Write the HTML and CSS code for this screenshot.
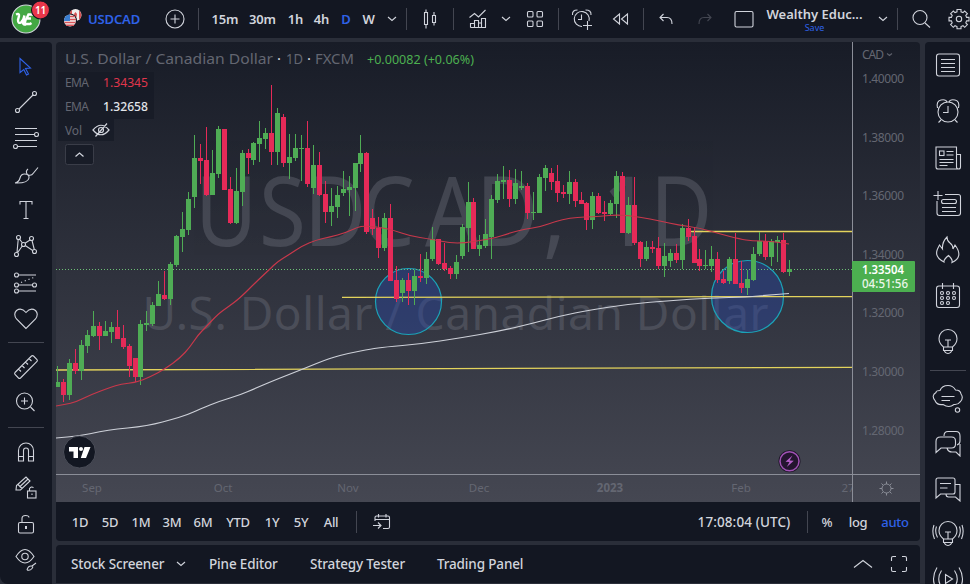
FILE: index.html
```
<!DOCTYPE html>
<html lang="en">
<head>
  <meta charset="UTF-8" />
  <meta name="viewport" content="width=device-width, initial-scale=1.0" />
  <title>USDCAD Chart</title>
  <link rel="stylesheet" href="styles.css">
</head>
<body>
  <div class="app">
    <header class="topbar">
      <div class="cell">
        <svg class="icon" width="52" height="38" viewBox="0 0 52 38">
          <circle cx="26" cy="19" r="14" fill="#43a843"/>
          <path d="M16 14.500q3.500-1.500 3 1.500l-1 4q0 4 3 2.500 2.500-2 3.500-7l-1.500 7q0 2.500 3 2M33 14.500h-4.500l-2 4h4.500M26 18.500l-1.500 5.500h5.500l1.500-1" stroke="#fff" stroke-width="2.400"/>
          <circle cx="40.500" cy="10" r="9" fill="#e8364a" stroke="#131722"/>
          <text class="badge" x="40.500" y="13.500" text-anchor="middle">11</text>
        </svg>
      </div>
      <div class="cell">
        <svg class="icon" width="36" height="38" viewBox="0 0 36 38">
          <circle cx="23.500" cy="15" r="6" fill="#f2eeee" stroke="none"/>
          <path d="M20 10a6 6 0 0 0-2 7l2 2zM27 10.200a6 6 0 0 1 0 9.600z" fill="#d75455" stroke="none"/>
          <path d="M22 14l1.500-2 1.500 2-.5 3h-2z" fill="#d75455" stroke="none"/>
          <circle cx="18" cy="20.500" r="7" fill="#131722" stroke="none"/>
          <circle cx="18" cy="20.500" r="6" fill="#f2eeee" stroke="none"/>
          <path d="M18 16.500h4.500M18 19.500h6M12.500 22.500h11M14 25.200h8" stroke="#d7555a" stroke-width="1.400"/>
          <path d="M18 14.500v6.500h-6q0-6 6-6.500z" fill="#3b7ed0" stroke="none"/>
        </svg>
      </div>
      <div class="cell start symbol">USDCAD</div>
      <div class="cell"><svg class="icon" width="22" height="22" viewBox="0 0 22 22"><circle cx="11" cy="11" r="9"/><path d="M11 6.500v9M6.500 11h9"/></svg></div>
      <div class="cell"><i class="vsep"></i></div>
      <div class="cell">15m</div>
      <div class="cell">30m</div>
      <div class="cell">1h</div>
      <div class="cell">4h</div>
      <div class="cell active">D</div>
      <div class="cell">W</div>
      <div class="cell"><svg class="icon" width="10" height="6" viewBox="0 0 10 6"><path d="M1 1l4 3.500L9 1"/></svg></div>
      <div class="cell"><i class="vsep"></i></div>
      <div class="cell"><svg class="icon" width="16" height="20" viewBox="0 0 16 20"><path d="M2.500 3.500h3v12h-3zM4 .5v3M4 15.500v4M10.500 6.500h3v7h-3zM12 3v3.500M12 13.500v3"/></svg></div>
      <div class="cell"><i class="vsep"></i></div>
      <div class="cell"><svg class="icon" width="20" height="20" viewBox="0 0 20 20"><path d="M1.500 8.500l5-4 4 3.500 7-7M2.500 18.500v-4h4v4M6.500 14.500v-3h4v7M10.500 14h3v4.500M13.500 14V9.500h4v9h-15"/></svg></div>
      <div class="cell"><svg class="icon" width="10" height="6" viewBox="0 0 10 6"><path d="M1 1l4 3.500L9 1"/></svg></div>
      <div class="cell"><svg class="icon" width="18" height="18" viewBox="0 0 18 18"><rect x="1.500" y="1.500" width="5.500" height="5.500" rx="1"/><rect x="11" y="1.500" width="5.500" height="5.500" rx="1"/><rect x="1.500" y="11" width="5.500" height="5.500" rx="1"/><rect x="11" y="11" width="5.500" height="5.500" rx="1"/></svg></div>
      <div class="cell"><i class="vsep"></i></div>
      <div class="cell"><svg class="icon" width="22" height="22" viewBox="0 0 22 22"><path d="M11 18.500A7.500 7.500 0 1 1 18 13M10.500 6.500v5H7M1.500 7Q1 2 6.500 2M20 7q.5-5-5.500-5M16.500 13v9M12 17.500h9"/></svg></div>
      <div class="cell"><svg class="icon" width="18" height="14" viewBox="0 0 18 14"><path d="M7.500 2v10l-6-5zM15.500 2v10l-6-5z"/></svg></div>
      <div class="cell"><i class="vsep"></i></div>
      <div class="cell"><svg class="icon" width="16" height="14" viewBox="0 0 16 14"><path d="M5.500 2L2 5.500 5.500 9M2 5.500h7q5 0 5 6.500"/></svg></div>
      <div class="cell dim"><svg class="icon" width="16" height="14" viewBox="0 0 16 14"><path d="M10.500 2L14 5.500 10.500 9M14 5.500H7q-5 0-5 6.500"/></svg></div>
      <div class="cell"><svg class="icon" width="20" height="18" viewBox="0 0 20 18"><rect x="1" y="1.500" width="18" height="15.500" rx="1.500"/></svg></div>
      <div class="cell layout"><span>Wealthy Educ...</span><small>Save</small></div>
      <div class="cell"><svg class="icon" width="10" height="6" viewBox="0 0 10 6"><path d="M1 1l4 3.500L9 1"/></svg></div>
      <div class="cell"><i class="vsep"></i></div>
      <div class="cell"><svg class="icon" width="20" height="20" viewBox="0 0 20 20"><circle cx="9" cy="8.500" r="7"/><path d="M14 14l5 4.500"/></svg></div>
      <div class="cell"><svg class="icon" width="22" height="22" viewBox="0 0 22 22"><path d="M9 1.500h4v2.300l2 .8 1.700-1.600 2.700 2.700L17.800 7.400l.8 2H21v3.500h-2.400l-.8 2 1.600 1.700-2.700 2.700-1.700-1.600-2 .8v2.300H9v-2.300l-2-.8-1.700 1.600-2.700-2.700 1.600-1.700-.8-2H1V9.400h2.400l.8-2-1.600-1.700 2.700-2.700L7 4.600l2-.8z"/><circle cx="11" cy="11" r="2.700"/></svg></div>
    </header>

    <div class="main">
      <nav class="tools">
        <div class="cell active"><svg class="icon" width="20" height="20" viewBox="0 0 20 20"><path d="M4 2.500l10.500 9.500-5 .5 3 5.500-2 1-2.700-5.500-3.800 3z"/></svg></div>
        <div class="cell"><svg class="icon" width="26" height="26" viewBox="0 0 26 26"><circle cx="4.500" cy="21.500" r="2"/><circle cx="21.500" cy="4.500" r="2"/><path d="M6 20L20 6"/></svg></div>
        <div class="cell"><svg class="icon" width="26" height="24" viewBox="0 0 26 24"><path d="M2 2.500h22M2 8.500h20M2 14.500h22M4 20.500h20"/><circle cx="23.500" cy="8.500" r="2"/><circle cx="2.500" cy="20.500" r="2"/></svg></div>
        <div class="cell"><svg class="icon" width="26" height="22" viewBox="0 0 26 22"><path d="M2 19q4-1 5-5 1-4 4.500-4 5 0 4.500 4-1 5.500-14 5M14.500 10.500Q12 7.500 15 5M15.500 11q3 1 5-2l4.500-5.500"/></svg></div>
        <div class="cell"><svg class="icon" width="16" height="20" viewBox="0 0 16 20"><path d="M2 3.500v-3h12v3M8 .5v17M5.500 17.500h5"/></svg></div>
        <div class="cell"><svg class="icon" width="26" height="24" viewBox="0 0 26 24"><circle cx="5.500" cy="3.500" r="2"/><circle cx="18.500" cy="4.500" r="2"/><circle cx="10.500" cy="10.500" r="2"/><circle cx="3.500" cy="20.500" r="2"/><circle cx="21.500" cy="17.500" r="2"/><path d="M5.200 5.500L4 18.500M6.500 5.200L9.500 9M12 9.200L17 6M9.300 12L4.500 18.700M12.200 11.500l7.500 5M19 6.500l2.300 9"/></svg></div>
        <div class="cell"><svg class="icon" width="26" height="22" viewBox="0 0 26 22"><circle cx="3.500" cy="3" r="2"/><circle cx="3.500" cy="13" r="2"/><circle cx="21.500" cy="13" r="2"/><circle cx="3.500" cy="19" r="2"/><path d="M5.500 3H23M5.500 13h14M5.500 19H23"/><path d="M8 10.500L22 5" stroke-dasharray="1.200 2.800"/></svg></div>
        <div class="cell"><svg class="icon" width="26" height="24" viewBox="0 0 26 24"><path d="M13 21.500L3.500 12Q0 7 3.500 3.500 8.500 0 13 5.500 17.500 0 22.500 3.500 26 7 22.500 12z"/></svg></div>
        <div class="cell"><i class="hsep"></i></div>
        <div class="cell"><svg class="icon" width="26" height="26" viewBox="0 0 26 26"><path d="M2 18.500L18.500 2q1-.8 2 0L24 5.500q.8 1 0 2L7.500 24q-1 .8-2 0L2 20.500q-.8-1 0-2zM5.500 15l2.500 2.500M9 11.500l2.500 2.500M12.500 8l2.500 2.500M16 4.500L18.500 7"/></svg></div>
        <div class="cell"><svg class="icon" width="22" height="22" viewBox="0 0 22 22"><circle cx="9.500" cy="10" r="8"/><path d="M15.500 16l4 4M9.500 6.500v7M6 10h7"/></svg></div>
        <div class="cell"><i class="hsep"></i></div>
        <div class="cell"><svg class="icon" width="20" height="22" viewBox="0 0 20 22"><path d="M2.500 19V8.500a7.500 7.500 0 0 1 15 0V19h-5V8.500a2.500 2.500 0 0 0-5 0V19zM2.500 14.500h5M12.500 14.500h5"/></svg></div>
        <div class="cell"><svg class="icon" width="24" height="26" viewBox="0 0 24 26"><path d="M2 15l.5-4.500L12 2l4 4-9.500 9zM4 9.500l4 4M5.500 12l8.500-8"/><rect x="13.500" y="16" width="8.500" height="7"/><path d="M15.500 16v-2.500q2-2.500 4-.8M18 18.500v1.500"/></svg></div>
        <div class="cell"><svg class="icon" width="20" height="22" viewBox="0 0 20 22"><rect x="2.500" y="8.500" width="15" height="10.500" rx="1.500"/><path d="M6 8.500v-4q0-3 3.500-3T13 3.500"/><path d="M10 12v3" stroke-width="2"/></svg></div>
        <div class="cell"><svg class="icon" width="24" height="26" viewBox="0 0 24 26"><path d="M2 9.500q9-14 18 0-9 13-18 0z"/><circle cx="11" cy="9.500" r="3.200"/><path d="M13 23q1-4 4-4t1 2.500-5 1.500M18 19l4-3"/></svg></div>
      </nav>

      <div class="center">
        <section class="chart">
          <svg id="chart" width="864" height="460" viewBox="56 42 864 460">
            <defs>
              <linearGradient id="bg" x1="0" y1="0" x2="0" y2="1">
                <stop offset="0" stop-color="#181c27"/>
                <stop offset="1" stop-color="#454752"/>
              </linearGradient>
              <clipPath id="plot"><rect x="56" y="42" width="796" height="460"/></clipPath>
            </defs>
            <rect x="56" y="42" width="864" height="460" fill="url(#bg)"/>
            <g class="watermark">
              <text x="221.600 294.300 345.500 410 483 541 617 650 684 738.600" y="246" font-size="97" transform="scale(0.88 1)">USDCAD, 1D</text>
              <text x="142.500" y="330" font-size="46" textLength="626">U.S. Dollar / Canadian Dollar</text>
            </g>
            <g class="zones">
              <circle cx="408.500" cy="301.500" r="33"/>
              <circle cx="747.500" cy="296.500" r="36"/>
            </g>
            <path class="level" d="M690 231.500H852M342 297.300L852 296.600M56 370L852 367.300"/>
            <path class="price-line" d="M56 269.500H852"/>
            <g id="candles"></g>
            <path id="fast" class="ema fast"/>
            <path id="slow" class="ema slow"/>
            <path class="axis" d="M852.500 42V502M56 474.500H920"/>

            <g class="legend">
              <path class="legend-bg" d="M58 72h96v47H58zM58 119h56v22H58z"/>
              <text x="65" y="64" font-size="15" textLength="208" lengthAdjust="spacingAndGlyphs">U.S. Dollar / Canadian Dollar</text>
              <text x="277" y="64" font-size="15" fill="#d1d4dc">·</text>
              <text x="286" y="64" font-size="15" textLength="17" lengthAdjust="spacingAndGlyphs">1D</text>
              <text x="307" y="64" font-size="15" fill="#d1d4dc">·</text>
              <text x="315" y="64" font-size="15" textLength="39" lengthAdjust="spacingAndGlyphs">FXCM</text>
              <text x="367" y="64" font-size="13" textLength="107" lengthAdjust="spacingAndGlyphs" class="up">+0.00082 (+0.06%)</text>
              <text x="65" y="87" font-size="12" textLength="24">EMA</text>
              <text x="103" y="87" font-size="13" textLength="45" lengthAdjust="spacingAndGlyphs" class="down">1.34345</text>
              <text x="65" y="111" font-size="12" textLength="24">EMA</text>
              <text x="103" y="111" font-size="13" textLength="45" lengthAdjust="spacingAndGlyphs" class="light">1.32658</text>
              <text x="65" y="134.500" font-size="12" textLength="17">Vol</text>
              <path class="line" d="M93 130q8-9.500 16 0-8 9.500-16 0zM95.500 136.500L107 123.500"/>
              <circle class="line" cx="101" cy="130" r="2.500"/>
              <rect class="collapse" x="65.500" y="144.500" width="28" height="20" rx="2"/>
              <path class="line" d="M75.500 156.500l4-3.500 4 3.500" stroke-width="1.500"/>
            </g>

            <g class="scale">
              <text x="862" y="59" textLength="22">CAD</text>
              <path d="M887 53.500l2.500 2 2.500-2" fill="none" stroke="#5d606b" stroke-width="1.200"/>
              <text x="862" y="83" textLength="42">1.40000</text>
              <text x="862" y="141.500" textLength="42">1.38000</text>
              <text x="862" y="200" textLength="42">1.36000</text>
              <text x="862" y="258.500" textLength="42">1.34000</text>
              <text x="862" y="317" textLength="42">1.32000</text>
              <text x="862" y="376" textLength="42">1.30000</text>
              <text x="862" y="435" textLength="42">1.28000</text>
            </g>
            <rect x="852" y="261" width="63" height="31" rx="1" fill="#4caf50"/>
            <text class="tag" x="862" y="274" textLength="42" lengthAdjust="spacingAndGlyphs">1.33504</text>
            <text class="tag time" x="862" y="288" textLength="46" lengthAdjust="spacingAndGlyphs">04:51:56</text>

            <g class="scale months" clip-path="url(#plot)" text-anchor="middle">
              <text x="92" y="492">Sep</text>
              <text x="223" y="492">Oct</text>
              <text x="348" y="492">Nov</text>
              <text x="479" y="492">Dec</text>
              <text x="610" y="492" font-weight="700">2023</text>
              <text x="741" y="492">Feb</text>
              <text x="848" y="492">27</text>
            </g>
            <g fill="none" stroke="#8a8d97">
              <circle cx="886.500" cy="488.500" r="4.500"/>
              <path d="M886.500 481.500v2.500M886.500 493v2.500M879.500 488.500h2.500M891 488.500h2.500M881.500 483.500l1.700 1.700M889.800 491.800l1.700 1.700M891.500 483.500l-1.700 1.700M883.200 491.800l-1.700 1.700"/>
            </g>

            <circle cx="79.500" cy="452" r="16" fill="#131722" stroke="#4b4e59"/>
            <path d="M69 447h9v11h-4.500v-6.500H69zM84.500 447h6L86 458h-5.200z" fill="#fff"/>
            <circle cx="81" cy="449" r="2" fill="#fff"/>
            <circle cx="789.500" cy="461.300" r="11" fill="#1c1426"/>
            <circle cx="789.500" cy="461.300" r="9.500" fill="#24152f" stroke="#a052b4" stroke-width="1.500"/>
            <path d="M792.500 455.500l-7 6.300 4 .2-2.700 5 7-6.300-4.200-.2z" fill="#b55fc9"/>
          </svg>
        </section>

        <div class="ranges">
          <div class="cell">1D</div>
          <div class="cell">5D</div>
          <div class="cell">1M</div>
          <div class="cell">3M</div>
          <div class="cell">6M</div>
          <div class="cell">YTD</div>
          <div class="cell">1Y</div>
          <div class="cell">5Y</div>
          <div class="cell">All</div>
          <div class="cell"><i class="vsep"></i></div>
          <div class="cell"><svg class="icon" width="18" height="18" viewBox="0 0 18 18"><path d="M2 8V4.500q0-1.500 1.500-1.500H15q1.500 0 1.500 1.500V14q0 1.500-1.500 1.500h-5M2 6.500h14.500M5.500 1v3.500M13 1v3.500M0 12.500h7.500M5 9.500l3 3-3 3"/></svg></div>
          <div></div>
          <div class="cell clock">17:08:04 (UTC)</div>
          <div class="cell"><i class="vsep"></i></div>
          <div class="cell">%</div>
          <div class="cell">log</div>
          <div class="cell active">auto</div>
        </div>

        <div class="panels">
          <div class="cell start">Stock Screener</div>
          <div class="cell"><svg class="icon" width="10" height="6" viewBox="0 0 10 6"><path d="M1 1l4 3.500L9 1"/></svg></div>
          <div class="cell start">Pine Editor</div>
          <div class="cell start">Strategy Tester</div>
          <div class="cell start">Trading Panel</div>
          <div class="cell"><svg class="icon" width="20" height="10" viewBox="0 0 20 10"><path d="M1 8.500l9-7 9 7"/></svg></div>
          <div class="cell"><svg class="icon" width="18" height="18" viewBox="0 0 18 18"><path d="M1.500 6V3q0-1.500 1.500-1.500h3M12 1.500h3q1.500 0 1.500 1.500v3M16.500 12v3q0 1.500-1.500 1.500h-3M6 16.500H3q-1.500 0-1.500-1.500v-3"/></svg></div>
        </div>
      </div>

      <aside class="widgets">
        <div class="cell"><svg class="icon" width="26" height="26" viewBox="0 0 26 26"><rect x="1.500" y="2" width="23" height="22" rx="2.500"/><path d="M6 7.500h14M6 11.500h14M6 15.500h14M6 19.500h14"/></svg></div>
        <div class="cell"><svg class="icon" width="26" height="26" viewBox="0 0 26 26"><circle cx="13" cy="14" r="10"/><path d="M13 8v6.500H8M2.500 10Q1 3 6 2t6 2M23.500 10Q25 3 20 2t-6 2M6 22l-2.500 2.500M20 22l2.500 2.500"/></svg></div>
        <div class="cell"><svg class="icon" width="28" height="26" viewBox="0 0 28 26"><path d="M23 24H4q-2 0-2-2V2h20.500v20q0 2 2 2t2-2V9.500h-4M12.500 6.500h7M12.500 10h7M5.500 14.500h14M5.500 17.500h14M5.500 20.500h8"/><rect x="5.500" y="6" width="4.500" height="4.500"/></svg></div>
        <div class="cell"><svg class="icon" width="30" height="28" viewBox="0 0 30 28"><path d="M12 4.500h13q2.500 0 2.500 2V23q0 2.500-2.500 2.500H6.500Q4 25.500 4 23V11M5 1v9M.5 5.500h9M9 17.500h14M9 21.500h14"/><rect x="8.500" y="9.500" width="15" height="4" rx="2"/></svg></div>
        <div class="cell"><svg class="icon" width="26" height="30" viewBox="0 0 26 30"><path d="M9 27Q-1 22 2.500 14l2-4 3 4Q7 7 12 2q0 4 3 6t3 6l2-4q9 12-3 17.500 1-3-3.500-7-5 4-4.500 6.500z"/></svg></div>
        <div class="cell"><svg class="icon" width="26" height="26" viewBox="0 0 26 26"><rect x="1.500" y="3" width="23" height="21.500" rx="2.500"/><path d="M7.500 0v6M18.500 0v6"/><g><circle cx="7" cy="10" r="1.500"/><circle cx="13" cy="10" r="1.500"/><circle cx="19" cy="10" r="1.500"/><circle cx="7" cy="15" r="1.500"/><circle cx="13" cy="15" r="1.500"/><circle cx="19" cy="15" r="1.500"/><circle cx="7" cy="20" r="1.500"/><circle cx="13" cy="20" r="1.500"/></g></svg></div>
        <div class="cell"><svg class="icon" width="22" height="28" viewBox="0 0 22 28"><path d="M6.500 19q-4.500-3.500-4.500-8.500a9 9 0 0 1 18 0q0 5-4.500 8.500zM6.500 19v3.500h9V19M7.500 22.500q0 2.500 3.500 3 3.500-.5 3.500-3M11 19v-7M8 12h6"/></svg></div>
        <div class="cell"><i class="hsep"></i></div>
        <div class="cell"><svg class="icon" width="32" height="30" viewBox="0 0 32 30"><path d="M8 6.500q2-5 8-5 5 0 7.500 4.500 5 0 5.500 4 3 4-1 8-2 3-6 2.500-5 4-11 0-6 1-8-4-4-5 1-8 0-2 4-2zM9.500 12.500h13M9.500 16.500h8.500"/><circle cx="25.500" cy="26" r="2.200"/></svg></div>
        <div class="cell"><svg class="icon" width="28" height="28" viewBox="0 0 28 28"><path d="M10 7q0-4.500 4-4.500h8q4 0 4 4.500v5q0 3-3 4M6.500 8h11q4 0 4 4v3q0 4-4 4H7l-5 4.500V12.500q0-4.500 4.500-4.500zM13 19q1 4 5 4h4l4 4V15"/></svg></div>
        <div class="cell"><svg class="icon" width="28" height="26" viewBox="0 0 28 26"><path d="M4 2h15q2 0 2 2v12q0 2-2 2H6.500L2 22V4q0-2 2-2zM6 7.500h11M6 12h7.500M21 8.500h5V25l-4.500-4h-7q-2.500 0-2.500-3"/></svg></div>
        <div class="cell"><svg class="icon" width="32" height="28" viewBox="0 0 32 28"><path d="M11.500 19Q7 15.500 7 10.500a9 9 0 0 1 18 0q0 5-4.500 8.500zM11.500 19v3.500h9V19M12.500 22.500q0 2.500 3.500 3 3.500-.5 3.500-3M16 19v-7M13 12h6M4.500 6.500q-2 5.500 1 11M2 5q-2.500 7 .5 14M27.500 6.500q2 5.500-1 11M30 5q2.500 7-.5 14"/></svg></div>
        <div class="cell"><svg class="icon" width="32" height="28" viewBox="0 0 32 28"><path d="M5 2.500Q-2 14 5 25M9.500 5.500Q4 14 9.500 22M27 2.500Q34 14 27 25M22.500 5.500Q28 14 22.500 22M13.500 9.500v9l7-4.500z"/></svg></div>
      </aside>
    </div>
  </div>

  <script>
    // [direction, high, body top, body bottom, low]
    const candles = [
      [1,366,382,387,387],[0,379,382,395,402],[1,359,363,395,400],[0,349,363,371,374],[1,340,345,371,380],
      [1,330,335,346,353],[1,311,326,336,337],[0,322,326,336,350],[1,321,331,336,336],[1,322,327,332,343],
      [0,310,327,339,339],[0,325,338,347,349],[0,344,346,366,377],[0,358,358,377,382],[1,320,324,377,385],
      [1,311,323,325,331],[1,302,305,324,326],[1,281,294,306,306],[0,271,295,299,300],[1,262,264,299,305],
      [1,235,236,265,267],[1,212,229,237,252],[1,192,199,230,235],[1,135,158,197,208],[0,144,158,161,184],
      [0,127,160,195,196],[1,150,173,195,195],[1,126,129,174,178],[0,129,129,190,190],[0,177,189,223,224],
      [1,168,191,223,224],[1,150,153,192,206],[0,149,153,158,174],[1,142,143,160,165],[1,121,138,144,162],
      [1,128,133,139,149],[0,85,133,152,165],[1,108,113,152,165],[0,114,117,163,167],[1,134,157,163,179],
      [1,134,148,158,161],[1,135,148,149,181],[0,121,148,184,187],[1,145,165,188,194],[0,152,165,195,196],
      [0,181,194,212,223],[1,188,206,212,226],[1,186,195,207,218],[1,171,189,193,196],[1,176,187,190,216],
      [1,163,163,188,211],[1,135,153,164,172],[0,152,153,232,234],[0,209,218,229,235],[0,217,228,248,258],
      [1,213,218,248,251],[0,204,218,281,281],[0,266,280,299,302],[1,278,280,293,302],[0,273,280,291,305],
      [1,270,276,291,305],[0,254,276,278,282],[1,252,259,278,284],[1,227,239,259,261],[0,239,239,264,265],
      [0,243,263,269,271],[0,266,268,274,279],[1,255,262,274,279],[1,224,227,256,259],[1,182,202,228,252],
      [0,198,202,249,249],[1,235,245,249,256],[1,219,234,246,248],[1,195,199,237,259],[1,174,181,200,203],
      [1,166,180,182,199],[0,170,180,199,207],[1,169,183,199,204],[1,171,186,188,190],[0,183,186,213,219],
      [1,192,212,213,220],[1,174,177,213,213],[1,165,168,178,191],[0,168,173,182,190],[0,165,181,193,202],
      [0,185,192,194,198],[1,171,182,194,204],[0,179,182,201,207],[0,192,200,204,204],[0,202,203,220,230],
      [1,192,196,220,229],[0,193,196,213,214],[0,201,212,214,221],[1,200,203,214,215],[1,171,176,204,218],
      [0,172,176,233,233],[1,197,205,233,234],[0,177,205,243,245],[0,241,242,259,267],[1,241,247,259,261],
      [0,241,247,249,253],[0,237,248,266,269],[1,243,256,266,277],[1,249,253,261,267],[0,244,253,260,263],
      [1,224,228,260,269],[0,219,228,237,241],[0,227,236,263,263],[0,249,259,266,271],[1,250,265,266,269],
      [1,246,259,266,272],[0,252,259,280,283],[0,271,279,283,284],[1,257,259,281,284],[0,233,259,284,284],
      [0,261,283,288,293],[1,270,279,288,295],[1,247,254,280,281],[1,232,241,254,256],[0,234,241,257,260],
      [1,239,241,257,266],[1,236,240,242,262],[0,233,240,272,273],[1,260,269,272,276]
    ];
    const fast = "56,406 65,404.5 76,402 90,395 110,387.5 121,384 136,382.5 150,377 165,369 180,358 190,347 198,335 205,328 218,314 228,307 240,298 256,282 270,269 277,262 290,254 302,246 316,240 330,237 345,233 358,227 364,226 378,227 393,230 410,236 430,239 450,243 465,243 482,240 495,238 510,233 525,229 540,227 555,221.5 570,218 585,217 600,216.5 618,214.5 640,217 660,221 678,225 700,228 720,234 740,239 752,241 770,241 789,244";
    const slow = "56,438 80,436 100,431.5 117,429 138,427 155,424 170,420 187,415 200,409 220,401 240,395 256,388 275,380 303,369 330,358 350,353 371,349 385,347 420,344 460,338 500,331 530,324 560,316 590,310 630,304 670,300.5 710,298 747,297 770,295 789,293.5";

    // quadratic curve through the midpoints of the list
    function smooth(list) {
      const p = list.split(" ").map(s => s.split(",").map(Number));
      let d = `M${p[0]}`;
      for (let i = 1; i < p.length - 1; i++) {
        d += `Q${p[i]} ${(p[i][0] + p[i + 1][0]) / 2},${(p[i][1] + p[i + 1][1]) / 2}`;
      }
      return d + `L${p[p.length - 1]}`;
    }

    const step = 5.947;
    let html = "";
    candles.forEach(([up, high, top, bottom, low], i) => {
      const x = Math.round(57.2 + i * step);
      const cls = up ? "bull" : "bear";
      html += `<path class="${cls}" d="M${x} ${high}h1V${low}h-1zM${x - 2} ${top}h5V${bottom}h-5z"/>`;
    });
    document.getElementById("candles").innerHTML = html;
    document.getElementById("fast").setAttribute("d", smooth(fast));
    document.getElementById("slow").setAttribute("d", smooth(slow));
  </script>
</body>
</html>
```

FILE: styles.css
```
* { box-sizing: border-box; }
body {
  margin: 0;
  background: #2a2e39;
  color: #d1d4dc;
  font-family: "Noto Sans", "Open Sans", sans-serif;
  font-size: 13px;
  overflow: hidden;
}
.app {
  display: flex;
  flex-direction: column;
  gap: 4px;
  width: 970px;
  height: 584px;
  overflow: hidden;
}
.topbar {
  display: grid;
  grid-template-columns: 52px 36px 74px 25px 23px 30px 45px 21px 31px 18px 27px 20px 8px 40px 7px 42px 14px 44px 3px 44px 34px 11px 34px 44px 33px 114px 18px 11px 36px 40px;
  height: 38px;
  flex: none;
  background: #131722;
  font-weight: 600;
  letter-spacing: -0.2px;
}
.cell {
  display: flex;
  align-items: center;
  justify-content: center;
  min-width: 0;
  white-space: nowrap;
}
.cell.start { justify-content: flex-start; }
.icon {
  flex: none;
  fill: none;
  stroke: currentColor;
  stroke-width: 1.1;
}
.icon text { stroke: none; }
.badge { fill: #fff; font-size: 10px; font-weight: 600; }
.symbol, .active { color: #2f62e8; }
.symbol { letter-spacing: -0.15px; }
.dim { color: #434651; }
.vsep { width: 1px; height: 22px; background: #434651; flex: none; }
.hsep { width: 36px; height: 1px; background: #434651; }
.layout {
  flex-direction: column;
  line-height: 15px;
  letter-spacing: 0;
  padding: 2px 5px 0 0;
}
.layout small {
  color: #2f62e8;
  font-size: 9px;
  font-weight: 400;
  line-height: 11px;
}
.main {
  display: flex;
  flex: 1;
  min-height: 0;
}
.tools {
  display: grid;
  grid-template-rows: 36px 36px 36px 37px 35px 36px 37px 35px 13px 36px 34px 17px 33px 38px 36px 34px;
  width: 52px;
  padding-top: 6px;
  background: #131722;
  border-radius: 0 4px 0 8px;
  align-content: start;
}
.center {
  display: flex;
  flex-direction: column;
  width: 864px;
  margin: 0 5px 0 4px;
}
.chart {
  height: 460px;
  flex: none;
  border-radius: 4px 4px 0 0;
  overflow: hidden;
}
.chart svg { display: block; }
.watermark text { fill: #787b86; opacity: 0.34; }
.zones circle { fill: rgba(41, 72, 168, 0.42); stroke: #1ba3b8; stroke-width: 1.2; }
.level { stroke: #e3d35c; stroke-width: 1.3; fill: none; }
.price-line { stroke: #6cc075; stroke-dasharray: 1 2; }
.bull { fill: #4fac55; }
.bear { fill: #e52a58; }
.ema { fill: none; stroke-width: 1.2; }
.fast { stroke: #c8384b; }
.slow { stroke: #cdd0d8; }
.axis { stroke: #8b8e98; fill: none; }
.legend text { fill: #636671; }
.legend text[fill] { fill: #d1d4dc; }
.legend .up { fill: #4caf50; }
.legend .down { fill: #e0364c; }
.legend .light { fill: #e3e5ea; font-weight: 500; }
.legend-bg { fill: #161a25; opacity: 0.7; }
.line { fill: none; stroke: #d1d4dc; stroke-width: 1.2; }
.collapse { fill: #181c27; stroke: #3a3d48; }
.scale text { fill: #646772; font-size: 12px; }
.months text { fill: #646772; font-size: 11.5px; }
.tag { fill: #fff; font-size: 12px; font-weight: 600; }
.tag.time { font-weight: 500; fill: #eaf6ea; }
.ranges {
  display: grid;
  grid-template-columns: 30px 30px 32px 30px 32px 38px 30px 28px 32px 19px 32px 1fr 112px 15px 24px 38px 36px;
  height: 39px;
  flex: none;
  padding: 1px 7px 0 9px;
  margin-bottom: 4px;
  background: #131722;
  border-radius: 0 0 4px 4px;
  font-weight: 500;
  letter-spacing: -0.3px;
}
.clock { font-size: 13.5px; letter-spacing: 0.1px; }
.panels {
  display: grid;
  grid-template-columns: 95px 43px 101px 127px 1fr 36px 36px;
  height: 38px;
  flex: none;
  padding: 0 3px 0 15px;
  background: #131722;
  border-radius: 4px 4px 0 0;
  font-size: 13.5px;
  font-weight: 500;
  letter-spacing: -0.15px;
}
.panels .cell:nth-child(2) { padding-right: 13px; }
.widgets {
  display: grid;
  grid-template-rows: 46px 46px 48px 44px 48px 44px 48px 8px 50px 38px 54px 36px 54px;
  width: 45px;
  background: #131722;
  border-radius: 4px 0 0 0;
  align-content: start;
  overflow: hidden;
}
```
